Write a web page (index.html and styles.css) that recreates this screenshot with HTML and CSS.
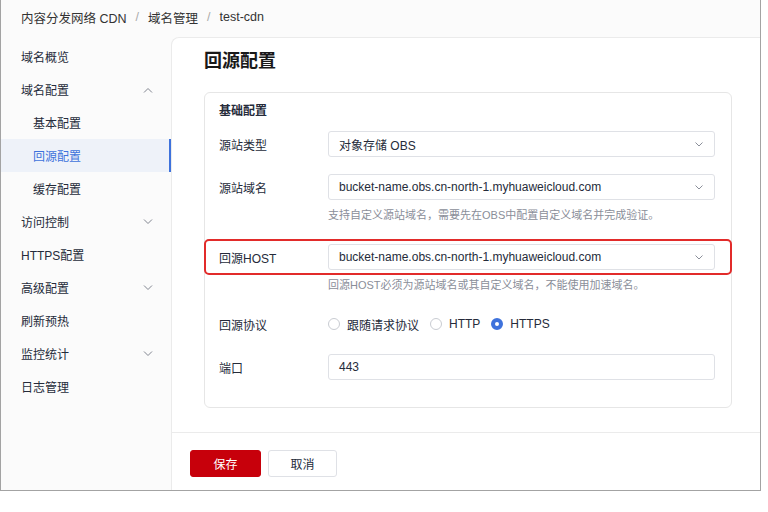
FILE: index.html
```html
<!DOCTYPE html>
<html lang="zh-CN">
<head>
    <meta charset="UTF-8">
    <meta name="viewport" content="width=device-width, initial-scale=1.0">
    <title>回源配置 - 内容分发网络 CDN</title>
    <link rel="stylesheet" href="styles.css">
</head>
<body>
    <div class="frame">
        <div class="breadcrumb">
            <span>内容分发网络 CDN</span>
            <span class="sep">/</span>
            <span>域名管理</span>
            <span class="sep">/</span>
            <span>test-cdn</span>
        </div>

        <div class="layout">
            <nav class="sidebar">
                <a class="nav-item">域名概览</a>
                <a class="nav-item">域名配置
                    <svg class="chevron" viewBox="0 0 10 6"><path d="M1 5.5L5 1.5L9 5.5"/></svg>
                </a>
                <a class="nav-item sub">基本配置</a>
                <a class="nav-item sub active">回源配置</a>
                <a class="nav-item sub">缓存配置</a>
                <a class="nav-item">访问控制
                    <svg class="chevron" viewBox="0 0 10 6"><path d="M1 0.5L5 4.5L9 0.5"/></svg>
                </a>
                <a class="nav-item">HTTPS配置</a>
                <a class="nav-item">高级配置
                    <svg class="chevron" viewBox="0 0 10 6"><path d="M1 0.5L5 4.5L9 0.5"/></svg>
                </a>
                <a class="nav-item">刷新预热</a>
                <a class="nav-item">监控统计
                    <svg class="chevron" viewBox="0 0 10 6"><path d="M1 0.5L5 4.5L9 0.5"/></svg>
                </a>
                <a class="nav-item">日志管理</a>
            </nav>

            <main class="panel">
                <h1 class="panel-title">回源配置</h1>

                <section class="card">
                    <h2 class="card-title">基础配置</h2>

                    <div class="form-row">
                        <label>源站类型</label>
                        <div class="select">
                            <span>对象存储 OBS</span>
                            <svg class="select-arrow" viewBox="0 0 8 5"><path d="M0.5 0.5L4 4L7.5 0.5"/></svg>
                        </div>
                    </div>

                    <div class="form-row">
                        <label>源站域名</label>
                        <div class="select">
                            <span>bucket-name.obs.cn-north-1.myhuaweicloud.com</span>
                            <svg class="select-arrow" viewBox="0 0 8 5"><path d="M0.5 0.5L4 4L7.5 0.5"/></svg>
                        </div>
                    </div>
                    <div class="help">支持自定义源站域名，需要先在OBS中配置自定义域名并完成验证。</div>

                    <div class="form-row highlight">
                        <label>回源HOST</label>
                        <div class="select">
                            <span>bucket-name.obs.cn-north-1.myhuaweicloud.com</span>
                            <svg class="select-arrow" viewBox="0 0 8 5"><path d="M0.5 0.5L4 4L7.5 0.5"/></svg>
                        </div>
                    </div>
                    <div class="help help-tight">回源HOST必须为源站域名或其自定义域名，不能使用加速域名。</div>

                    <div class="form-row radio-row">
                        <label>回源协议</label>
                        <div class="radio-group">
                            <span class="radio"><i class="dot"></i>跟随请求协议</span>
                            <span class="radio"><i class="dot"></i>HTTP</span>
                            <span class="radio checked"><i class="dot"></i>HTTPS</span>
                        </div>
                    </div>

                    <div class="form-row">
                        <label>端口</label>
                        <div class="input">443</div>
                    </div>
                </section>

                <div class="panel-footer">
                    <button class="btn btn-primary">保存</button>
                    <button class="btn">取消</button>
                </div>
            </main>
        </div>
    </div>
</body>
</html>
```

FILE: styles.css
```css
body {
    margin: 0;
    background-color: #ffffff;
    font-family: "Liberation Sans", "Noto Sans CJK SC", sans-serif;
    font-size: 12px;
    color: #252b3a;
}

.frame {
    width: 761px;
    height: 491px;
    box-sizing: border-box;
    border-left: 1px solid #a3a3a3;
    border-right: 1px solid #a3a3a3;
    border-bottom: 1px solid #a3a3a3;
    background-color: #fbfbfb;
    display: flex;
    flex-direction: column;
}

/* 面包屑 */
.breadcrumb {
    height: 37px;
    padding-left: 20px;
    display: flex;
    align-items: center;
    padding-bottom: 3px;
    box-sizing: border-box;
    font-size: 12.5px;
    color: #333;
}

.breadcrumb .sep {
    color: #aaa;
    margin: 0 9px;
}

.layout {
    flex: 1;
    display: flex;
    min-height: 0;
}

/* 左侧菜单 */
.sidebar {
    width: 170px;
    padding-top: 3px;
    flex-shrink: 0;
}

.nav-item {
    display: flex;
    align-items: center;
    justify-content: space-between;
    height: 33px;
    padding: 0 18px 0 20px;
    color: #252b3a;
    cursor: pointer;
}

.nav-item.sub {
    padding-left: 32px;
}

.nav-item.active {
    background-color: #eef2f9;
    color: #3e72dc;
    box-shadow: inset -2px 0 0 #3e72dc;
}

.chevron {
    width: 10px;
    height: 6px;
    fill: none;
    stroke: #80848f;
    stroke-width: 1;
}

/* 主面板 */
.panel {
    flex: 1;
    display: flex;
    flex-direction: column;
    background-color: #ffffff;
    border-top: 1px solid #ebebeb;
    border-left: 1px solid #ebebeb;
    border-top-left-radius: 8px;
    padding: 0 27px 0 32px;
}

.panel-title {
    margin: 11px 0 19px;
    font-size: 18px;
    line-height: 24px;
    font-weight: 600;
    color: #191919;
}

.card {
    width: 528px;
    box-sizing: border-box;
    border: 1px solid #e6e6e6;
    border-radius: 6px;
    padding: 9px 16px 27px 14px;
}

.card-title {
    margin: 0 0 11px;
    font-size: 12px;
    line-height: 18px;
    font-weight: 600;
}

.form-row {
    display: grid;
    grid-template-columns: 109px 387px;
    align-items: center;
    margin-top: 17px;
}

.card-title + .form-row {
    margin-top: 0;
}

.form-row label {
    color: #252b3a;
}

.form-row.highlight {
    margin: 16px -17px 0 -15px;
    padding: 3px 15px 3px 13px;
    border: 2px solid #e22b2a;
    border-radius: 5px;
}

.select,
.input {
    height: 26px;
    box-sizing: border-box;
    border: 1px solid #dfe1e6;
    border-radius: 3px;
    padding: 0 11px 0 10px;
    display: flex;
    align-items: center;
    justify-content: space-between;
    background-color: #ffffff;
    color: #252b3a;
}

.select-arrow {
    width: 8px;
    height: 5px;
    fill: none;
    stroke: #8a8e99;
    stroke-width: 1;
}

.help {
    margin-top: 7px;
    padding-left: 109px;
    line-height: 16px;
    font-size: 11px;
    color: #8a8e99;
}

.help-tight {
    margin-top: 2px;
}

.form-row.radio-row {
    margin-top: 18px;
    height: 26px;
}

.radio-group {
    display: flex;
    align-items: center;
}

.radio {
    display: inline-flex;
    align-items: center;
    margin-right: 11px;
}

.radio .dot {
    width: 12px;
    height: 12px;
    box-sizing: border-box;
    border: 1px solid #c9ccd2;
    border-radius: 50%;
    margin-right: 7px;
    background-color: #ffffff;
}

.radio.checked .dot {
    border: 4px solid #3e72dc;
}

/* 底部按钮 */
.panel-footer {
    margin: 24px -27px 0 -32px;
    padding: 17px 18px;
    border-top: 1px solid #ebebeb;
    flex: 1;
    display: flex;
    align-items: flex-start;
    gap: 7px;
}

.btn {
    height: 27px;
    width: 69px;
    border: 1px solid #dfe1e6;
    border-radius: 3px;
    background-color: #ffffff;
    color: #252b3a;
    font-family: inherit;
    font-size: 12px;
    cursor: pointer;
}

.btn-primary {
    width: 71px;
    border-color: #c7000b;
    background-color: #c7000b;
    color: #ffffff;
}
```
